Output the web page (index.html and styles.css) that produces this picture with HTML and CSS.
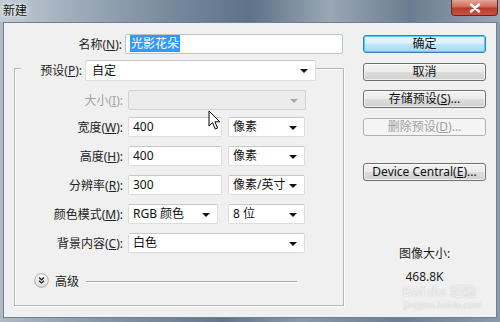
FILE: index.html
```html
<!DOCTYPE html>
<html lang="zh-CN">
<head>
    <meta charset="UTF-8">
    <title>新建</title>
    <link rel="stylesheet" href="styles.css">
</head>
<body>

<div class="titlebar">
    <span class="title">新建</span>
    <div class="close">
        <svg width="14" height="10" viewBox="0 0 14 10">
            <path d="M3 1.5 L11 8.5 M11 1.5 L3 8.5" stroke="#fff" stroke-width="2.4" stroke-linecap="round"/>
        </svg>
    </div>
</div>

<div class="client">
    <div class="left">
        <div class="name-row">
            <label class="name-label">名称(<u>N</u>):</label>
            <div class="textbox wide"><span class="selected">光影花朵</span></div>
        </div>

        <div class="group">
            <div class="preset-row">
                <label class="preset-label">预设(<u>P</u>):</label>
                <div class="combo preset">自定<span class="arrow"></span></div>
            </div>
            <div class="row first">
                <label class="row-label disabled">大小(<u>I</u>):</label>
                <div class="combo size off"><span class="arrow"></span></div>
            </div>
            <div class="row gap7">
                <label class="row-label">宽度(<u>W</u>):</label>
                <div class="textbox num">400</div>
                <div class="combo unit">像素<span class="arrow"></span></div>
            </div>
            <div class="row">
                <label class="row-label">高度(<u>H</u>):</label>
                <div class="textbox num">400</div>
                <div class="combo unit">像素<span class="arrow"></span></div>
            </div>
            <div class="row">
                <label class="row-label">分辨率(<u>R</u>):</label>
                <div class="textbox num">300</div>
                <div class="combo unit">像素/英寸<span class="arrow"></span></div>
            </div>
            <div class="row">
                <label class="row-label">颜色模式(<u>M</u>):</label>
                <div class="combo mode">RGB 颜色<span class="arrow"></span></div>
                <div class="combo unit">8 位<span class="arrow"></span></div>
            </div>
            <div class="row">
                <label class="row-label">背景内容(<u>C</u>):</label>
                <div class="combo bg">白色<span class="arrow"></span></div>
            </div>
            <div class="advanced">
                <svg class="adv-icon" width="15" height="15" viewBox="0 0 15 15">
                    <defs>
                        <linearGradient id="ball" x1="0" y1="0" x2="0" y2="1">
                            <stop offset="0" stop-color="#ffffff"/>
                            <stop offset="1" stop-color="#dcdcdc"/>
                        </linearGradient>
                    </defs>
                    <circle cx="7.5" cy="7.5" r="6.8" fill="url(#ball)" stroke="#a7a7a7"/>
                    <path d="M5 4.6 L7.5 6.8 L10 4.6 M5 7.8 L7.5 10 L10 7.8" fill="none" stroke="#222" stroke-width="1.3"/>
                </svg>
                <span class="adv-text">高级</span>
                <span class="adv-line"></span>
            </div>
        </div>
    </div>

    <div class="right">
        <div class="btn default">确定</div>
        <div class="btn">取消</div>
        <div class="btn tight">存储预设(<u>S</u>)...</div>
        <div class="btn off">删除预设(<u>D</u>)...</div>
        <div class="btn far">Device Central(<u>E</u>)...</div>
        <div class="info">图像大小:</div>
        <div class="info value">468.8K</div>
    </div>
</div>

<!-- mouse pointer and watermark sit on top of the dialog -->
<svg class="cursor" width="14" height="21" viewBox="0 0 14 21">
    <path d="M1 1 L1 16 L4.5 12.6 L7.3 19 L9.6 18 L6.9 11.8 L11.8 11.8 Z" fill="#fff" stroke="#000" stroke-width="1" stroke-linejoin="round"/>
</svg>
<div class="watermark">
    <div class="wm-logo">Bai<span class="wm-du">du</span> 经验</div>
    <div class="wm-url">jingyan.baidu.com</div>
</div>

</body>
</html>
```

FILE: styles.css
```css
body {
    margin: 0;
    width: 500px;
    height: 322px;
    overflow: hidden;
    position: relative;
    font-family: "Noto Sans", "Noto Sans CJK SC", sans-serif;
    font-size: 12px;
    color: #1e1e1e;
    background: linear-gradient(90deg, #aeb9c4 0%, #8796a6 20%, #62768b 45%, #8a99a9 60%, #6b7e92 80%, #8b9aab 100%);
}
u {
    text-decoration: underline;
    text-underline-offset: 1px;
}

/* title bar */
.titlebar {
    height: 22px;
    display: flex;
    align-items: flex-start;
    justify-content: space-between;
    background: linear-gradient(90deg, #c3ccd5 0%, #a5b2bf 12%, #76889b 35%, #5e7287 50%, #9aa7b4 66%, #6b7d91 82%, #9aa7b4 100%);
}
.title {
    margin: 3px 0 0 3px;
    line-height: 16px;
    font-size: 12px;
    color: #111;
    text-shadow: 0 0 6px rgba(255, 255, 255, 0.9), 0 0 3px rgba(255, 255, 255, 0.9);
}
.close {
    width: 45px;
    height: 15px;
    margin-right: 2px;
    border: 1px solid #5b2a24;
    border-top: none;
    border-radius: 0 0 4px 4px;
    background: linear-gradient(180deg, #e2a597 0%, #cf6b57 45%, #b8392a 55%, #c9563f 100%);
    display: flex;
    align-items: center;
    justify-content: center;
}

/* dialog body */
.client {
    margin: 0 3px;
    height: 294px;
    border: 1px solid #6f8093;
    background: #f0f0f0;
    display: flex;
}
.left {
    width: 342px;
}
.right {
    width: 123px;
    margin-left: 17px;
}

.name-row {
    margin-top: 11px;
    display: flex;
    height: 20px;
    align-items: center;
}
.name-label {
    width: 118px;
    padding-right: 3px;
    text-align: right;
}

.textbox, .combo {
    box-sizing: border-box;
    height: 20px;
    background: #fff;
    border: 1px solid #dadde2;
    border-top-color: #c5c9cf;
    border-radius: 2px;
    line-height: 18px;
    padding-left: 4px;
    position: relative;
    color: #111;
}
.textbox.wide {
    width: 218px;
    border-color: #b8c4d1;
}
.selected {
    background: #3399ff;
    color: #fff;
    padding: 0 1px;
}
.textbox.num {
    width: 94px;
}

.combo .arrow {
    position: absolute;
    right: 7px;
    top: 8px;
    border-left: 4px solid transparent;
    border-right: 4px solid transparent;
    border-top: 4px solid #111;
}
.combo.off {
    background: #ececec;
    border-color: #d2d2d2;
}
.combo.off .arrow {
    border-top-color: #a8a8a8;
}

/* group box */
.group {
    box-sizing: border-box;
    margin: 14px 0 0 10px;
    width: 330px;
    height: 238px;
    border: 1px solid #b6b6b6;
    box-shadow: inset 1px 1px 0 #fff, 1px 1px 0 #fff;
}
.preset-row {
    margin-top: -9px;
    display: flex;
    height: 21px;
    align-items: center;
}
.preset-label {
    margin-left: 6px;
    width: 58px;
    padding: 0 3px;
    text-align: right;
    background: #f0f0f0;
    line-height: 21px;
}
.combo.preset {
    width: 231px;
    height: 21px;
    line-height: 19px;
    padding-left: 6px;
}

.row {
    display: flex;
    align-items: center;
    height: 20px;
    margin-top: 9px;
}
.row.gap7 {
    margin-top: 7px;
}
.row-label {
    width: 108px;
    padding-right: 5px;
    text-align: right;
    color: #222;
}
.row-label.disabled {
    color: #a3a3a3;
}
.combo.size {
    width: 178px;
}
.combo.unit {
    width: 77px;
    margin-left: 6px;
}
.combo.mode {
    width: 90px;
    margin-left: 0;
}
.combo.mode + .combo.unit {
    margin-left: 10px;
}
.combo.bg {
    width: 177px;
}

.advanced {
    display: flex;
    align-items: center;
    height: 15px;
    margin-top: 20px;
}
.adv-icon {
    margin-left: 19px;
}
.adv-text {
    margin-left: 6px;
    color: #222;
}
.adv-line {
    flex: 1;
    height: 1px;
    margin: 1px 46px 0 7px;
    background: #a9a9a9;
    box-shadow: 0 1px 0 #fff;
}

/* buttons */
.btn {
    box-sizing: border-box;
    height: 18px;
    margin-top: 10px;
    border: 1px solid #707070;
    border-radius: 3px;
    background: linear-gradient(180deg, #f2f2f2 0%, #ebebeb 48%, #dddddd 52%, #cfcfcf 100%);
    box-shadow: inset 0 0 0 1px rgba(255, 255, 255, 0.7);
    text-align: center;
    line-height: 16px;
    color: #111;
}
.btn.default {
    margin-top: 12px;
    border-color: #3c7fb1;
    background: linear-gradient(180deg, #eaf6fd 0%, #d9f0fc 48%, #bee6fd 52%, #a7d9f5 100%);
    box-shadow: inset 0 0 0 1px #48d1fa;
}
.btn.tight {
    margin-top: 9px;
}
.btn.off {
    border-color: #adb2b5;
    background: #f4f4f4;
    color: #a0a0a0;
    box-shadow: none;
}
.btn.far {
    margin-top: 27px;
}
.info {
    margin-top: 66px;
    text-align: center;
    line-height: 14px;
}
.info.value {
    margin-top: 9px;
}

/* overlays */
.cursor {
    position: absolute;
    left: 208px;
    top: 110px;
}
.watermark {
    position: absolute;
    left: 402px;
    top: 285px;
    color: rgba(255, 255, 255, 0.75);
    text-shadow: 0 0 1px rgba(120, 120, 120, 0.5);
}
.wm-logo {
    font-family: "DejaVu Sans", "Noto Sans CJK SC", sans-serif;
    font-size: 13px;
    font-weight: bold;
    line-height: 14px;
}
.wm-du {
    margin-left: 2px;
}
.wm-url {
    font-size: 9px;
    line-height: 11px;
    margin-left: 2px;
}
```
